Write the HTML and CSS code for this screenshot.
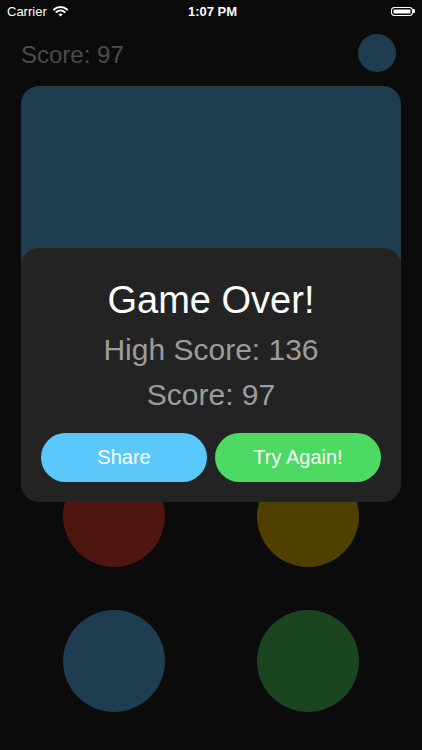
FILE: index.html
```html
<!DOCTYPE html>
<html>
<head>
<title>Simon</title>
<meta name=viewport content="width=device-width, initial-scale=1">
<link rel="stylesheet" href="styles.css">
</head>
<body>

<div class=status>
 <div class=carrier>Carrier
  <svg class=wifi width="15" height="11" viewBox="0 0 15 11">
   <path d="M1 3.6 A9.5 9.5 0 0 1 14 3.6" fill="none" stroke="#fff" stroke-width="2" stroke-linecap="round"/>
   <path d="M3.4 6 A6 6 0 0 1 11.6 6" fill="none" stroke="#fff" stroke-width="2" stroke-linecap="round"/>
   <path d="M5.4 8.6 L7.5 10.6 L9.6 8.6 A3 3 0 0 0 5.4 8.6 Z" fill="#fff"/>
  </svg>
 </div>
 <div class=clock>1:07 PM</div>
 <div class=battery><span class=cell></span><span class=nub></span></div>
</div>

<div class=top>
 <div class=score>Score: 97</div>
 <div class=dot></div>
</div>

<div class=panel></div>

<div class=pads>
 <div class="pad red"></div>
 <div class="pad yellow"></div>
 <div class="pad blue"></div>
 <div class="pad green"></div>
</div>

<div class=over>
 <h1>Game Over!</h1>
 <p>High Score: 136</p>
 <p>Score: 97</p>
 <div class=buttons>
  <button class="btn share">Share</button>
  <button class="btn again">Try Again!</button>
 </div>
</div>

</body>
</html>
```

FILE: styles.css
```css
body {
 margin:0;
 width:422px;
 height:750px;
 background-color:#0b0b0b;
 color:white;
 font-family:"Liberation Sans",Arial,sans-serif;
 position:relative;
 overflow:hidden;
}
.status {
 height:22px;
 display:flex;
 align-items:center;
 justify-content:space-between;
 padding:0 7px;
 font-size:13px;
}
.carrier {
 display:flex;
 align-items:center;
 gap:6px;
 width:80px;
}
.clock {
 font-weight:bold;
 padding-left:3px;
}
.battery {
 width:80px;
 display:flex;
 justify-content:flex-end;
 align-items:center;
}
.battery .cell {
 width:20px;
 height:7px;
 border:1.5px solid #fff;
 border-radius:3px;
 background:#fff;
 box-shadow:inset 0 0 0 1.5px #0b0b0b;
}
.battery .nub {
 width:2px;
 height:4px;
 background:#fff;
 border-radius:0 1px 1px 0;
}
.top {
 margin-top:12px;
 display:flex;
 justify-content:space-between;
 align-items:center;
 padding:0 26px 0 21px;
}
.score {
 font-size:24px;
 line-height:28px;
 color:#4b4b4b;
 padding-top:4px;
}
.dot {
 width:38px;
 height:38px;
 border-radius:50%;
 background:#1e3d50;
}
.panel {
 margin:14px 21px 0;
 height:360px;
 border-radius:18px;
 background:#1e3c4e;
}
.pads {
 margin-top:19px;
 display:grid;
 grid-template-columns:102px 102px;
 justify-content:center;
 column-gap:92px;
 row-gap:43px;
}
.pad {
 width:102px;
 height:102px;
 border-radius:50%;
}
.red { background:#4f1510; }
.yellow { background:#4f4000; }
.blue { background:#1e3d50; }
.green { background:#1a4520; }
.over {
 position:absolute;
 top:248px;
 left:21px;
 width:380px;
 box-sizing:border-box;
 padding:29px 20px 20px;
 background:#232323;
 border-radius:18px;
 text-align:center;
}
.over h1 {
 margin:0;
 font-size:38px;
 line-height:46px;
 font-weight:normal;
 color:#fff;
}
.over p {
 margin:9px 0 0;
 font-size:30px;
 line-height:36px;
 color:#9c9c9c;
}
.buttons {
 margin-top:20px;
 display:flex;
 gap:8px;
}
.btn {
 flex:1;
 height:49px;
 border:none;
 border-radius:25px;
 color:#fff;
 font-family:"Liberation Sans",Arial,sans-serif;
 font-size:20px;
 padding:0;
}
.share { background:#5ac8fa; }
.again { background:#4cd964; }
```
